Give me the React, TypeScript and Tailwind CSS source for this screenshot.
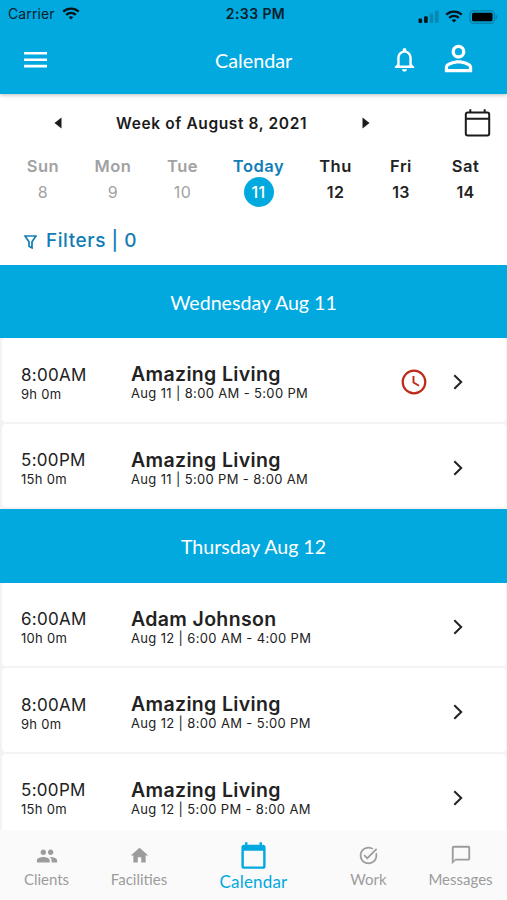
import {
  MdCalendarToday,
  MdChatBubbleOutline,
  MdHome,
  MdNotificationsNone,
  MdPeople,
  MdPersonOutline,
  MdTaskAlt,
} from 'react-icons/md';

const days = [
  { name: 'Sun', date: '8', state: 'past', width: 'w-[70px]' },
  { name: 'Mon', date: '9', state: 'past', width: 'w-[70px]' },
  { name: 'Tue', date: '10', state: 'past', width: 'w-[69px]' },
  { name: 'Today', date: '11', state: 'today', width: 'w-[83px]' },
  { name: 'Thu', date: '12', state: 'future', width: 'w-[71px]' },
  { name: 'Fri', date: '13', state: 'future', width: 'w-[60px]' },
  { name: 'Sat', date: '14', state: 'future', width: 'w-[69px]' },
];

const schedule = [
  {
    title: 'Wednesday Aug 11',
    visits: [
      { start: '8:00AM', length: '9h 0m', client: 'Amazing Living', range: 'Aug 11 | 8:00 AM - 5:00 PM', late: true },
      { start: '5:00PM', length: '15h 0m', client: 'Amazing Living', range: 'Aug 11 | 5:00 PM - 8:00 AM', late: false },
    ],
  },
  {
    title: 'Thursday Aug 12',
    visits: [
      { start: '6:00AM', length: '10h 0m', client: 'Adam Johnson', range: 'Aug 12 | 6:00 AM - 4:00 PM', late: false },
      { start: '8:00AM', length: '9h 0m', client: 'Amazing Living', range: 'Aug 12 | 8:00 AM - 5:00 PM', late: false },
      { start: '5:00PM', length: '15h 0m', client: 'Amazing Living', range: 'Aug 12 | 5:00 PM - 8:00 AM', late: false },
    ],
  },
];

type Visit = (typeof schedule)[number]['visits'][number];

const Wifi = () => (
  <svg width="18" height="13" viewBox="0 0 18 13" fill="none" stroke="#06141b" strokeWidth="2.3">
    <path d="M1.2 4.7C5.6.5 12.4.5 16.8 4.7" />
    <path d="M4.2 7.9c2.8-2.6 6.8-2.6 9.6 0" />
    <path d="M6.7 10.2c1.4-1.2 3.2-1.2 4.6 0L9 12.6z" fill="#06141b" stroke="none" />
  </svg>
);

const StatusBar = () => (
  <div className="flex h-7 items-center px-2 text-[#06202b]">
    <div className="-mt-0.5 flex flex-1 items-center gap-[7px] text-[14px] tracking-[0.1px]">
      Carrier
      <Wifi />
    </div>
    <div className="-mt-0.5 ml-[4px] text-[14px] font-semibold tracking-[0.4px]">2:33 PM</div>
    <div className="flex flex-1 items-center justify-end gap-1.5 pt-[5px]">
      <svg width="21" height="13" viewBox="0 0 21 13">
        <rect x="0.5" y="8.5" width="3.6" height="4.5" rx="1" fill="#06141b" />
        <rect x="6.1" y="6.3" width="3.6" height="6.7" rx="1" fill="#06141b" />
        <rect x="11.7" y="3.6" width="3.6" height="9.4" rx="1" fill="#0789b4" />
        <rect x="17" y="0.5" width="3.6" height="12.5" rx="1" fill="#0789b4" />
      </svg>
      <Wifi />
      <svg width="30" height="14" viewBox="0 0 30 14">
        <rect x="1" y="0.7" width="24.5" height="12.6" rx="3.5" fill="none" stroke="#0684ad" strokeWidth="1.4" />
        <rect x="3" y="2.7" width="20.5" height="8.6" rx="1.5" fill="#000" />
        <path d="M26.8 4.5c2 .8 2 4.2 0 5z" fill="#0684ad" />
      </svg>
    </div>
  </div>
);

const Header = () => (
  <header className="relative h-[94px] shrink-0 bg-[#02a9df] shadow-[0_1px_4px_rgba(0,0,0,0.28)]">
    <StatusBar />
    <div className="flex h-16 items-center pr-[33px] pl-6 text-white">
      <svg width="23" height="16" viewBox="0 0 23 16" fill="currentColor">
        <path d="M0 0h23v2.6H0zM0 6.4h23V9H0zM0 12.8h23v2.6H0z" />
      </svg>
      <h1 className="ml-[168px] flex-1 font-[Lato] text-[19.8px] leading-6">Calendar</h1>
      <MdNotificationsNone size={29} className="-mt-[2px] mr-[19px]" />
      <MdPersonOutline size={41} className="-mr-[5px] -mt-[3px]" />
    </div>
  </header>
);

const Week = () => (
  <section className="h-[171px] shrink-0 bg-white">
    <div className="flex h-[58px] items-center pr-4 pl-[54px] text-[#1b1b1b]">
      <svg width="8" height="12" viewBox="0 0 8 12">
        <path d="M7.5.5v11L.5 6z" fill="currentColor" />
      </svg>
      <div className="mt-px ml-[54px] w-[193px] text-[15.5px] font-semibold tracking-[0.62px] whitespace-nowrap">
        Week of August 8, 2021
      </div>
      <svg width="8" height="12" viewBox="0 0 8 12" className="ml-[53px]">
        <path d="M.5.5v11l7-5.5z" fill="currentColor" />
      </svg>
      <svg width="27" height="28" viewBox="0 0 27 28" fill="none" stroke="currentColor" strokeWidth="2" className="ml-auto">
        <rect x="1.8" y="3.6" width="23.4" height="22.9" rx="2" />
        <path d="M1.8 9.8h23.4M6.3.3v3.4M20.7.3v3.4" />
      </svg>
    </div>

    <div className="flex pt-[3px] pl-2 text-center text-[16px]">
      {days.map((day) => (
        <div
          key={day.date}
          className={`${day.width} shrink-0 ${
            day.state === 'past' ? 'text-[#a2a2a2]' : day.state === 'today' ? 'text-[#127db5]' : 'text-[#222]'
          }`}
        >
          <div className="h-[22px] text-[16.5px] leading-[22px] font-semibold tracking-[0.5px]">{day.name}</div>
          <div
            className={`mx-auto flex size-[30px] items-center justify-center rounded-full tracking-[0.4px] ${
              day.state === 'today'
                ? 'bg-[#02a9df] font-medium text-white'
                : day.state === 'future'
                  ? 'font-semibold'
                  : ''
            }`}
          >
            {day.date}
          </div>
        </div>
      ))}
    </div>

    <div className="flex items-center gap-[9px] pt-[22px] pl-6 text-[#127db5]">
      <svg width="13" height="14" viewBox="0 0 13 14" fill="none" stroke="currentColor" strokeWidth="1.7" className="mt-0.5">
        <path d="M1 1h11L8 6.8v6.1l-3-1.7V6.8z" />
      </svg>
      <span className="text-[19px] leading-6 font-medium tracking-[0.55px]">Filters | 0</span>
    </div>
  </section>
);

const VisitRow = ({ visit }: { visit: Visit }) => (
  <div className="h-[85.5px] bg-[#f3f3f3] pr-px pb-[2px] pl-[2px]">
    <div className="flex h-full items-center rounded-[4px] bg-white pt-[4px] pr-[43px] pl-[19px] text-[#222]">
      <div className="w-[110px] pt-[2px]">
        <div className="text-[17px] leading-[21px] tracking-[0.3px]">{visit.start}</div>
        <div className="text-[13px] leading-4 tracking-[0.3px]">{visit.length}</div>
      </div>
      <div className="flex-1 pt-px">
        <div className="text-[19.5px] leading-[21px] font-semibold tracking-[0.35px]">{visit.client}</div>
        <div className="text-[13px] leading-4 tracking-[0.35px]">{visit.range}</div>
      </div>
      {visit.late && (
        <svg width="26" height="26" viewBox="0 0 26 26" fill="none" stroke="#bd2a17" strokeWidth="2.2" className="mr-[26px]">
          <circle cx="13" cy="13" r="11.3" />
          <path d="M12.5 7v6.5l5.5 3.3" strokeWidth="1.9" />
        </svg>
      )}
      <svg width="10" height="16" viewBox="0 0 10 16" fill="none" stroke="#222" strokeWidth="2">
        <path d="M1.3 1.3 8.2 8l-6.9 6.7" />
      </svg>
    </div>
  </div>
);

const BottomNav = () => (
  <nav className="flex h-[70px] shrink-0 bg-[#fafafa] font-[Lato] text-[15px] text-[#9c9c9c]">
    <div className="flex w-[93px] flex-col items-center pt-[15px]">
      <MdPeople size={22} />
      <span className="mt-[2px] leading-5">Clients</span>
    </div>
    <div className="flex w-[92px] flex-col items-center pt-[15px]">
      <MdHome size={21} />
      <span className="mt-[3px] leading-5">Facilities</span>
    </div>
    <div className="flex w-[137px] flex-col items-center pt-[11px] text-[#02a9df]">
      <MdCalendarToday size={29} />
      <span className="mt-[2px] text-[17px] leading-5 tracking-[0.2px]">Calendar</span>
    </div>
    <div className="flex w-[93px] flex-col items-center pt-[15px]">
      <MdTaskAlt size={21} />
      <span className="mt-[3px] leading-5">Work</span>
    </div>
    <div className="flex w-[91px] flex-col items-center pt-[14px]">
      <MdChatBubbleOutline size={22} />
      <span className="mt-[3px] leading-5">Messages</span>
    </div>
  </nav>
);

export default function App() {
  return (
    <div className="flex h-[900px] w-[507px] flex-col overflow-hidden bg-white font-[Inter,sans-serif]">
      <Header />
      <Week />
      <main className="min-h-0 flex-1 overflow-hidden">
        {schedule.map((group) => (
          <section key={group.title}>
            <h2 className="flex h-[73.4px] items-center justify-center bg-[#02a9df] pt-px font-[Lato] text-[19.6px] text-white">
              {group.title}
            </h2>
            {group.visits.map((visit) => (
              <VisitRow key={visit.start} visit={visit} />
            ))}
          </section>
        ))}
      </main>
      <BottomNav />
    </div>
  );
}
